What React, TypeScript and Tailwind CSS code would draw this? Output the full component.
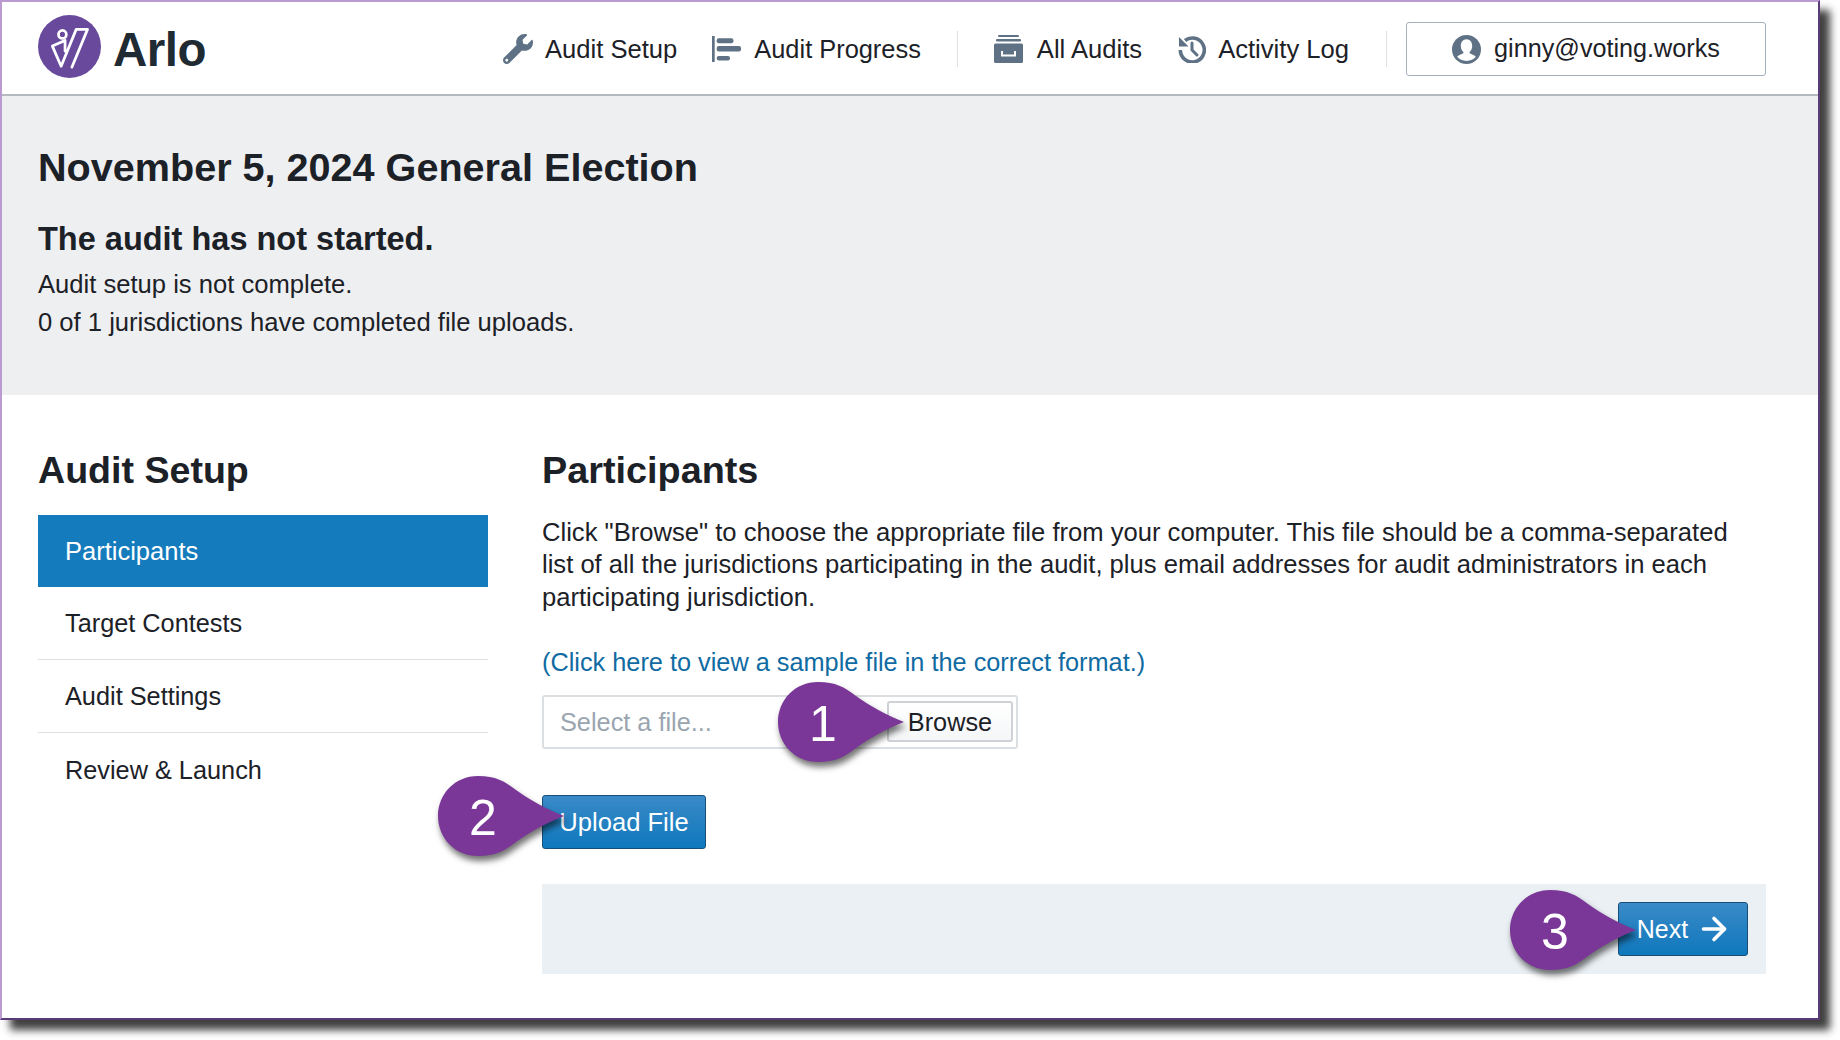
import { FaWrench } from 'react-icons/fa'
import { ArrowRight } from 'lucide-react'

const FONT = "font-['Liberation_Sans',Arial,sans-serif]"

function BarsIcon() {
  return (
    <svg width="30" height="26" viewBox="0 0 30 26" fill="#5f7285">
      <rect x="0" y="0" width="2.700" height="26" />
      <rect x="4.700" y="2.300" width="16.700" height="5" rx="2" />
      <rect x="4.700" y="10" width="24.300" height="5.500" rx="2" />
      <rect x="4.700" y="20" width="13.300" height="4.500" rx="2" />
    </svg>
  )
}

function ArchiveIcon() {
  return (
    <svg width="29" height="28" viewBox="0 0 29 28" fill="#5f7285" className="mr-[2px]">
      <rect x="4" y="0" width="21" height="2" rx="1" />
      <rect x="2" y="4" width="25" height="2.500" rx="1" />
      <rect x="0" y="8.500" width="29" height="19.500" rx="1.500" />
      <path d="M8 16v4.500h13V16" fill="none" stroke="#fff" strokeWidth="2" />
    </svg>
  )
}

function HistoryIcon() {
  return (
    <svg width="28" height="28" viewBox="0 0 28 28" fill="none" stroke="#5f7285">
      <path d="M7 5.500A12 12 0 1 1 2.300 15" strokeWidth="3.600" />
      <path d="M1 2V11.500H10.500Z" fill="#5f7285" stroke="none" />
      <path d="M14 8V15L19 20" strokeWidth="3" strokeLinecap="round" strokeLinejoin="round" />
    </svg>
  )
}

function UserIcon() {
  return (
    <svg width="29" height="29" viewBox="0 0 28 28">
      <circle cx="14" cy="14" r="14" fill="#5f7285" />
      <path d="M14 4c-3.600 0-5.500 3-5.500 6.500 0 2.400.9 4.400 2.300 5.600.5.5.4 1.400-.3 1.800-2 1-4.500 1.600-5.500 3.100 2 2.600 5.200 4 9 4s7-1.400 9-4c-1-1.500-3.500-2.100-5.500-3.100-.7-.4-.8-1.300-.3-1.800 1.400-1.200 2.300-3.200 2.300-5.600C19.500 7 17.600 4 14 4z" fill="#fff" />
    </svg>
  )
}

function Logo() {
  return (
    <svg width="63" height="63" viewBox="0 0 64 64" className="mb-[4px]">
      <circle cx="32" cy="32" r="32" fill="#68499c" />
      <circle cx="24.800" cy="19.700" r="4" fill="none" stroke="#fff" strokeWidth="2.800" />
      <path d="M27.500 36.700V25.900L14.600 31.600L23.500 52L38.800 14.600H50.300L34.400 53" fill="none" stroke="#fff" strokeWidth="2.800" strokeLinejoin="round" strokeLinecap="round" />
    </svg>
  )
}

function Pin({ n, className }: { n: number; className: string }) {
  return (
    <div className={`absolute h-[80px] w-[126px] drop-shadow-[2px_5px_3px_rgba(0,0,0,0.55)] ${className}`}>
      <svg width="126" height="80" viewBox="0 0 126 80" className="absolute inset-0">
        <path d="M40 0C58 0 66 5 78 14C92 24 110 34 126 40C110 46 92 56 78 66C66 75 58 80 40 80C17 80 0 62 0 40C0 18 17 0 40 0Z" fill="#7a3798" />
      </svg>
      <span className="absolute left-0 top-[2px] flex h-[80px] w-[90px] items-center justify-center text-[50px] leading-none text-white">{n}</span>
    </div>
  )
}

function NavLink({ icon, label, size = 'text-[25.600px]' }: { icon: React.ReactNode; label: string; size?: string }) {
  return (
    <a className={`flex items-center gap-3 ${size} text-[#1c2127]`}>
      {icon}
      {label}
    </a>
  )
}

const SIDE_ITEMS = ['Target Contests', 'Audit Settings', 'Review & Launch']

export default function App() {
  return (
    <div className={`${FONT} h-[1040px] w-[1840px] overflow-hidden bg-white text-[#1c2127]`}>
      <div className="relative h-[1020px] w-[1820px] border-2 border-t-[#b99bd2] border-l-[#b99bd2] border-r-[#5b3a78] border-b-[#5b3a78] bg-white shadow-[10px_10px_8px_rgba(0,0,0,0.75)]">
        {/* Top nav */}
        <header className="flex h-[94px] items-center border-b-2 border-[#b5bac0] pl-[36px] pr-[52px]">
          <div className="flex items-center gap-[12px]">
            <Logo />
            <span className="pt-[4px] text-[47.500px] font-bold leading-none tracking-[-0.5px] text-[#1f2a33]">Arlo</span>
          </div>
          <nav className="ml-auto flex items-center pt-[2px]">
            <NavLink icon={<FaWrench size={30} color="#5f7285" />} label="Audit Setup" />
            <div className="w-[35px]" />
            <NavLink icon={<BarsIcon />} label="Audit Progress" size="text-[25.400px]" />
            <div className="ml-[36px] mr-[36px] h-[36px] w-px bg-[#dcdfe3]" />
            <NavLink icon={<ArchiveIcon />} label="All Audits" />
            <div className="w-[36px]" />
            <NavLink icon={<HistoryIcon />} label="Activity Log" />
            <div className="ml-[37px] mr-[19px] h-[36px] w-px bg-[#dcdfe3]" />
            <button className="flex h-[54px] w-[360px] items-center justify-center gap-[13px] rounded-[3px] border border-[#a3b0bd] text-[25.200px]">
              <UserIcon />
              ginny@voting.works
            </button>
          </nav>
        </header>

        {/* Election summary */}
        <section className="h-[299px] bg-[#eeeff1] pl-[36px] pt-[46px]">
          <h1 className="text-[39.600px] font-bold leading-[50px]">November 5, 2024 General Election</h1>
          <h2 className="mt-[27px] text-[32.500px] font-bold leading-[40px]">The audit has not started.</h2>
          <p className="mt-[6px] text-[25.600px] leading-[38px]">Audit setup is not complete.</p>
          <p className="text-[25.600px] leading-[38px]">0 of 1 jurisdictions have completed file uploads.</p>
        </section>

        <div className="flex pl-[36px] pr-[52px] pt-[51px]">
          {/* Sidebar */}
          <aside className="w-[450px] shrink-0">
            <h2 className="text-[37.600px] font-bold leading-[48px]">Audit Setup</h2>
            <div className="mt-[21px] flex h-[72px] items-center bg-[#147bbd] pl-[27px] text-[25.500px] text-white">Participants</div>
            {SIDE_ITEMS.map((item, i) => (
              <div key={item} className={`flex h-[73px] items-center pl-[27px] pt-[2px] text-[25.300px] ${i < 2 ? 'border-b border-[#dfe2e5]' : ''}`}>
                {item}
              </div>
            ))}
          </aside>

          {/* Participants step */}
          <main className="ml-[54px] flex-1">
            <h2 className="text-[37.800px] font-bold leading-[48px]">Participants</h2>
            <p className="mt-[22px] max-w-[1195px] text-[25.600px] leading-[32.300px]">
              Click "Browse" to choose the appropriate file from your computer. This file should be a comma-separated list of all the jurisdictions participating in the audit, plus email addresses for audit administrators in each participating jurisdiction.
            </p>
            <a className="mt-[33px] block text-[25.300px] leading-[32px] text-[#106ba3]">(Click here to view a sample file in the correct format.)</a>
            <div className="mt-[17px] flex h-[54px] w-[476px] items-center justify-between rounded-[3px] border-2 border-[#dcdfe2] pl-[16px] pr-[3px]">
              <span className="pt-[2px] text-[25.300px] text-[#9aa5b0]">Select a file...</span>
              <button className="flex h-[41px] w-[126px] items-center justify-center rounded-[3px] border-2 border-[#ced2d6] bg-[linear-gradient(#ffffff,#f4f6f8)] pt-[3px] text-[25.300px]">Browse</button>
            </div>
            <button className="mt-[46px] flex h-[54px] w-[164px] items-center justify-center rounded-[3px] border border-[#174f78] bg-[linear-gradient(#3a8ac7,#0f78bd)] text-[25.600px] text-white">Upload File</button>
            <div className="mt-[35px] flex h-[90px] items-center justify-end bg-[#ebf0f4] pr-[18px]">
              <button className="flex h-[54px] w-[130px] items-center justify-center gap-[8px] rounded-[3px] border border-[#174f78] bg-[linear-gradient(#3a8ac7,#0f78bd)] pl-[3px] text-[25px] text-white">
                <span className="pt-[2px]">Next</span>
                <ArrowRight size={36} strokeWidth={2.400} />
              </button>
            </div>
          </main>
        </div>

        <Pin n={1} className="left-[776px] top-[680px]" />
        <Pin n={2} className="left-[436px] top-[774px]" />
        <Pin n={3} className="left-[1508px] top-[888px]" />
      </div>
    </div>
  )
}
